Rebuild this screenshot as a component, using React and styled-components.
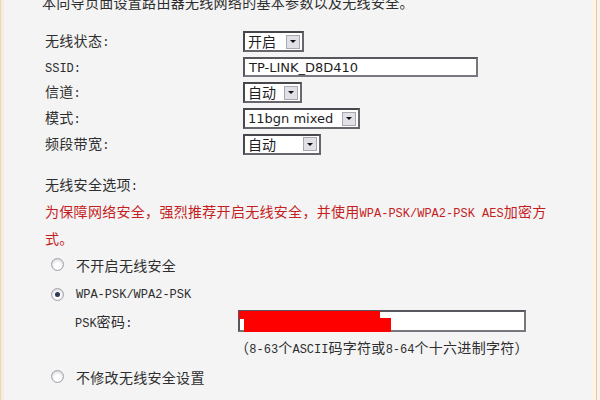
import React from 'react';
import styled, { createGlobalStyle } from 'styled-components';

const GlobalStyle = createGlobalStyle`
  html, body {
    margin: 0;
    padding: 0;
  }
  body {
    width: 600px;
    height: 400px;
    overflow: hidden;
    background: #f4f4f5;
    font-family: "Noto Sans CJK SC", "DejaVu Sans", sans-serif;
  }
`;

const Frame = styled.div`
  width: 600px;
  height: 400px;
  display: flex;
  overflow: hidden;
`;

const LeftEdge = styled.div`
  width: 4px;
  flex: none;
  background: linear-gradient(to right, #e6d7c1 0 1px, #f8ecdc 1px);
`;

const RightEdge = styled.div`
  width: 8px;
  flex: none;
  background: linear-gradient(to right, #fdf3e6 0 4px, #d6c8b2 4px 5px, #fdf3e6 5px);
`;

const Content = styled.div`
  flex: 1;
  padding-left: 41px;
  color: #2e2e2e;
  font-size: 14px;
  letter-spacing: 0.3px;
`;

const Mono = styled.span`
  font-family: "Liberation Mono", monospace;
  font-size: 12px;
  letter-spacing: 0;
`;

const Intro = styled.div`
  margin: -8px 0 0 -3px;
  line-height: 20px;
`;

const Form = styled.div`
  margin-top: 17px;
  display: grid;
  grid-template-columns: 198px auto;
  grid-auto-rows: 25.6px;
  align-items: center;
  justify-items: start;
`;

const Label = styled.div`
  line-height: 20px;
`;

const SelectBox = styled.div`
  box-sizing: border-box;
  width: ${p => p.$w}px;
  height: 21px;
  border: 2px solid #47474d;
  border-right-color: #66666c;
  border-bottom-color: #66666c;
  background: #fff;
  display: flex;
  align-items: center;
  justify-content: space-between;
  padding: 0 2px 0 3px;
  color: #1e1e1e;
  font-family: ${p => (p.$latin ? '"DejaVu Sans", sans-serif' : '"Noto Sans CJK SC", sans-serif')};
  font-size: ${p => (p.$latin ? '13px' : '14px')};
  letter-spacing: 0;
  line-height: 17px;
`;

const DropBtn = styled.span`
  box-sizing: border-box;
  width: 14px;
  height: 14px;
  border: 1px solid #a8a8b0;
  background: #e0e0e6;
  display: flex;
  align-items: center;
  justify-content: center;

  &::after {
    content: '';
    border-left: 3px solid transparent;
    border-right: 3px solid transparent;
    border-top: 3px solid #111;
  }
`;

const TextBox = styled.div`
  box-sizing: border-box;
  position: relative;
  width: ${p => p.$w}px;
  height: ${p => p.$h || 20}px;
  border: 2px solid #57575d;
  border-right-color: #77777d;
  border-bottom-color: #77777d;
  background: #fff;
  padding: 0 4px;
  display: flex;
  align-items: center;
  font-family: "DejaVu Sans", sans-serif;
  font-size: 13px;
  letter-spacing: 0;
  color: #1e1e1e;
`;

const Redaction = styled.svg`
  position: absolute;
  left: -1px;
  top: -1px;
`;

const SectionTitle = styled.div`
  margin-top: 15px;
  line-height: 24px;
`;

const Notice = styled.div`
  max-width: 512px;
  color: #c41e1e;
  line-height: 24px;
`;

const Options = styled.div`
  display: flex;
  flex-direction: column;
`;

const RadioRow = styled.div`
  height: 30px;
  display: flex;
  align-items: center;
  gap: 12px;
  padding-left: 6px;
`;

const Radio = styled.span`
  box-sizing: border-box;
  width: 13px;
  height: 13px;
  border-radius: 50%;
  border: 1px solid #a2a2aa;
  background: radial-gradient(circle at 50% 60%, #ffffff 0 35%, #d6d6dc 80%);
  display: flex;
  align-items: center;
  justify-content: center;

  &::after {
    content: '';
    width: 5px;
    height: 5px;
    border-radius: 50%;
    background: ${p => (p.$checked ? '#2b3a55' : 'transparent')};
  }
`;

const PskRow = styled.div`
  display: flex;
  align-items: center;
  height: 22px;
`;

const PskLabel = styled.div`
  width: 163px;
  padding-left: 30px;
  flex: none;
`;

const Hint = styled.div`
  margin: 3px 0 0 190px;
  line-height: 24px;
`;

function Select({ w, latin, children }) {
  return (
    <SelectBox $w={w} $latin={latin}>
      <span>{children}</span>
      <DropBtn />
    </SelectBox>
  );
}

export default function App() {
  return (
    <>
      <GlobalStyle />
      <Frame>
        <LeftEdge />
        <Content>
          <Intro>本向导页面设置路由器无线网络的基本参数以及无线安全。</Intro>

          <Form>
            <Label>无线状态<Mono>:</Mono></Label>
            <Select w={61}>开启</Select>

            <Label><Mono>SSID:</Mono></Label>
            <TextBox $w={235}>TP-LINK_D8D410</TextBox>

            <Label>信道<Mono>:</Mono></Label>
            <Select w={59}>自动</Select>

            <Label>模式<Mono>:</Mono></Label>
            <Select w={117} latin>11bgn mixed</Select>

            <Label>频段带宽<Mono>:</Mono></Label>
            <Select w={78}>自动</Select>
          </Form>

          <SectionTitle>无线安全选项<Mono>:</Mono></SectionTitle>
          <Notice>
            为保障网络安全，强烈推荐开启无线安全，并使用<Mono>WPA-PSK/WPA2-PSK AES</Mono>加密方式。
          </Notice>

          <Options>
            <RadioRow>
              <Radio />
              <span>不开启无线安全</span>
            </RadioRow>
            <RadioRow>
              <Radio $checked />
              <Mono>WPA-PSK/WPA2-PSK</Mono>
            </RadioRow>
            <PskRow>
              <PskLabel><Mono>PSK</Mono>密码<Mono>:</Mono></PskLabel>
              <TextBox $w={288} $h={22}>
                <Redaction width="160" height="22" viewBox="0 0 160 22">
                  <rect x="0" y="0" width="141" height="8" fill="#f00" />
                  <rect x="5" y="7" width="147" height="14" fill="#f00" />
                </Redaction>
              </TextBox>
            </PskRow>
            <Hint>（<Mono>8-63</Mono>个<Mono>ASCII</Mono>码字符或<Mono>8-64</Mono>个十六进制字符）</Hint>
            <RadioRow>
              <Radio />
              <span>不修改无线安全设置</span>
            </RadioRow>
          </Options>
        </Content>
        <RightEdge />
      </Frame>
    </>
  );
}
